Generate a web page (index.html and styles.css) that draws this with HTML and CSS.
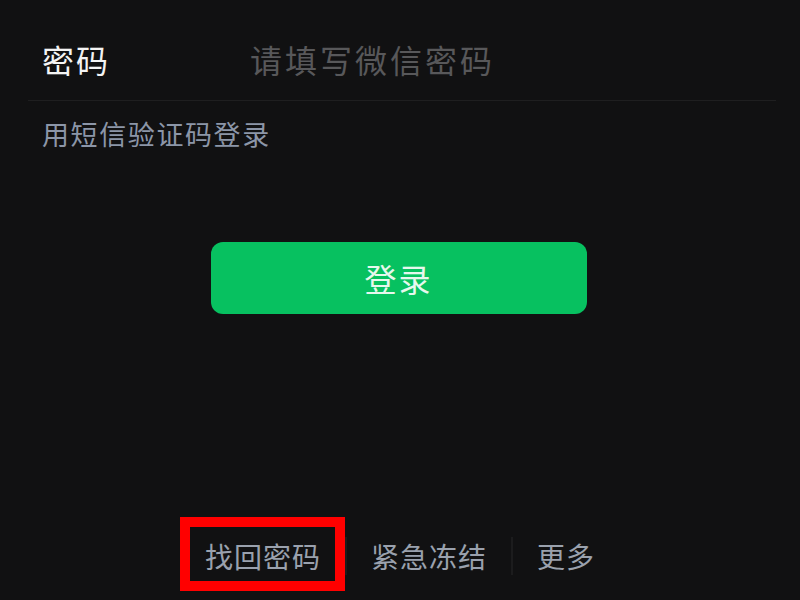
FILE: index.html
```html
<!DOCTYPE html>
<html lang="zh-CN">

<head>
    <meta charset="UTF-8">
    <meta name="viewport" content="width=device-width, initial-scale=1.0">
    <title>登录</title>
    <link rel="stylesheet" href="styles.css">
</head>

<body>
    <div class="page">
        <div class="form">
            <div class="field-row">
                <span class="field-label">密码</span>
                <span class="field-input">请填写微信密码</span>
            </div>
            <div class="sms-link">用短信验证码登录</div>
        </div>

        <button class="login-btn">登录</button>

        <div class="footer">
            <span class="footer-item">找回密码<span class="mark-box"></span></span>
            <span class="footer-item">紧急冻结</span>
            <span class="footer-item">更多</span>
        </div>
    </div>
</body>

</html>
```

FILE: styles.css
```css
body {
    margin: 0;
    background-color: #111112;
    font-family: "Noto Sans CJK SC", "Noto Sans", sans-serif;
}

.page {
    display: flex;
    flex-direction: column;
    height: 600px;
}

.form {
    margin: 0 24px 0 28px;
}

.field-row {
    display: flex;
    align-items: center;
    padding: 40px 14px 22px;
    border-bottom: 1px solid #1f1f20;
    font-size: 32px;
    line-height: 38px;
}

.field-label {
    width: 208px;
    color: #f4f4f4;
    letter-spacing: 2px;
}

.field-input {
    color: #58585a;
    letter-spacing: 3px;
}

.sms-link {
    margin-top: 17px;
    padding-left: 14px;
    font-size: 27px;
    line-height: 32px;
    color: #8c96a8;
    letter-spacing: 1.6px;
}

.login-btn {
    align-self: center;
    width: 376px;
    height: 72px;
    margin-top: 92px;
    margin-right: 3px;
    border: none;
    border-radius: 12px;
    background-color: #07c160;
    color: #e6f8ed;
    font-family: inherit;
    font-size: 32px;
    letter-spacing: 2px;
}

.footer {
    display: flex;
    justify-content: center;
    margin-top: auto;
    padding-bottom: 25px;
}

.footer-item {
    position: relative;
    padding: 0 24px;
    font-size: 28px;
    line-height: 38px;
    color: #9aa1ad;
    letter-spacing: 1px;
}

.footer-item + .footer-item {
    border-left: 2px solid #1c1c1d;
}

.mark-box {
    position: absolute;
    left: -1px;
    right: 0;
    top: -20px;
    bottom: -16px;
    border: 10px solid #ff0000;
}
```
